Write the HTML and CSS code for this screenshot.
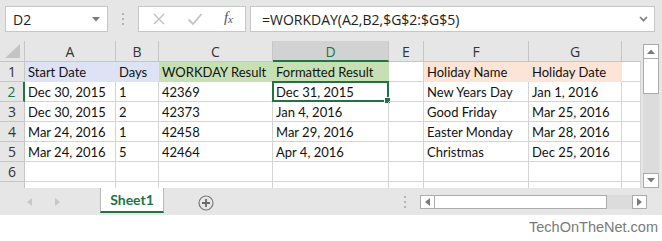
FILE: index.html
```html
<!DOCTYPE html>
<html lang="en">
<head>
    <meta charset="UTF-8">
    <title>WORKDAY example</title>
    <link rel="stylesheet" href="styles.css">
</head>
<body>
    <!-- formula bar -->
    <div class="formula-bar">
        <div class="name-box">
            <span>D2</span>
            <svg class="caret" width="8" height="5" viewBox="0 0 8 5"><path d="M0 0H8L4 4.5Z" fill="#7a7a7a"/></svg>
        </div>
        <div class="grip"><i></i><i></i><i></i></div>
        <div class="fx-buttons">
            <svg width="14" height="14" viewBox="0 0 14 14"><path d="M2 2L12 12M12 2L2 12" stroke="#c2c2c2" stroke-width="1.4"/></svg>
            <svg width="16" height="14" viewBox="0 0 16 14"><path d="M1.5 7.5L6 12L14.5 2" stroke="#c2c2c2" stroke-width="1.8" fill="none"/></svg>
            <span class="fx">f<sub>x</sub></span>
        </div>
        <div class="formula-input">
            <span>=WORKDAY(A2,B2,$G$2:$G$5)</span>
            <svg class="chevron" width="9" height="6" viewBox="0 0 9 6"><path d="M1 1L4.5 4.5L8 1" stroke="#7a7a7a" stroke-width="1.6" fill="none"/></svg>
        </div>
    </div>

    <!-- worksheet -->
    <div class="sheet-area">
        <div class="grid">
            <div class="corner"><svg width="18" height="16" viewBox="0 0 18 16"><path d="M17 1V15H2Z" fill="#c4c4c4"/></svg></div>
            <div class="col-head">A</div>
            <div class="col-head">B</div>
            <div class="col-head">C</div>
            <div class="col-head active">D</div>
            <div class="col-head">E</div>
            <div class="col-head">F</div>
            <div class="col-head">G</div>
            <div class="col-head last"></div>

            <div class="row-head">1</div>
            <div class="cell blue">Start Date</div>
            <div class="cell blue">Days</div>
            <div class="cell green">WORKDAY Result</div>
            <div class="cell green">Formatted Result</div>
            <div class="cell"></div>
            <div class="cell orange">Holiday Name</div>
            <div class="cell orange">Holiday Date</div>
            <div class="cell"></div>

            <div class="row-head active">2</div>
            <div class="cell">Dec 30, 2015</div>
            <div class="cell">1</div>
            <div class="cell">42369</div>
            <div class="cell selected">Dec 31, 2015<span class="handle"></span></div>
            <div class="cell"></div>
            <div class="cell">New Years Day</div>
            <div class="cell">Jan 1, 2016</div>
            <div class="cell"></div>

            <div class="row-head">3</div>
            <div class="cell">Dec 30, 2015</div>
            <div class="cell">2</div>
            <div class="cell">42373</div>
            <div class="cell">Jan 4, 2016</div>
            <div class="cell"></div>
            <div class="cell">Good Friday</div>
            <div class="cell">Mar 25, 2016</div>
            <div class="cell"></div>

            <div class="row-head">4</div>
            <div class="cell">Mar 24, 2016</div>
            <div class="cell">1</div>
            <div class="cell">42458</div>
            <div class="cell">Mar 29, 2016</div>
            <div class="cell"></div>
            <div class="cell">Easter Monday</div>
            <div class="cell">Mar 28, 2016</div>
            <div class="cell"></div>

            <div class="row-head">5</div>
            <div class="cell">Mar 24, 2016</div>
            <div class="cell">5</div>
            <div class="cell">42464</div>
            <div class="cell">Apr 4, 2016</div>
            <div class="cell"></div>
            <div class="cell">Christmas</div>
            <div class="cell">Dec 25, 2016</div>
            <div class="cell"></div>

            <div class="row-head">6</div>
            <div class="cell"></div>
            <div class="cell"></div>
            <div class="cell"></div>
            <div class="cell"></div>
            <div class="cell"></div>
            <div class="cell"></div>
            <div class="cell"></div>
            <div class="cell"></div>

            <div class="row-head part"></div>
            <div class="cell part"></div>
            <div class="cell part"></div>
            <div class="cell part"></div>
            <div class="cell part"></div>
            <div class="cell part"></div>
            <div class="cell part"></div>
            <div class="cell part"></div>
            <div class="cell part"></div>
        </div>

        <div class="vscroll">
            <div class="sb-btn"><svg width="8" height="5" viewBox="0 0 8 5"><path d="M0 5H8L4 0.5Z" fill="#7a7a7a"/></svg></div>
            <div class="v-thumb"></div>
            <div class="v-track"></div>
            <div class="sb-btn"><svg width="8" height="5" viewBox="0 0 8 5"><path d="M0 0H8L4 4.5Z" fill="#7a7a7a"/></svg></div>
        </div>
    </div>

    <!-- sheet tabs -->
    <div class="tab-bar">
        <div class="tab-nav">
            <svg width="5" height="8" viewBox="0 0 5 8"><path d="M5 0V8L0 4Z" fill="#c8c8c8"/></svg>
            <svg width="5" height="8" viewBox="0 0 5 8"><path d="M0 0V8L5 4Z" fill="#c8c8c8"/></svg>
        </div>
        <div class="tab">Sheet1</div>
        <div class="add-sheet">
            <svg width="16" height="16" viewBox="0 0 16 16"><circle cx="8" cy="8" r="7" stroke="#7a7a7a" stroke-width="1.2" fill="none"/><path d="M8 4V12M4 8H12" stroke="#6a6a6a" stroke-width="1.8"/></svg>
        </div>
        <div class="grip tab-grip"><i></i><i></i><i></i></div>
        <div class="hscroll">
            <div class="sb-btn"><svg width="5" height="8" viewBox="0 0 5 8"><path d="M5 0V8L0 4Z" fill="#7a7a7a"/></svg></div>
            <div class="h-thumb"></div>
            <div class="h-track"></div>
            <div class="sb-btn"><svg width="5" height="8" viewBox="0 0 5 8"><path d="M0 0V8L5 4Z" fill="#7a7a7a"/></svg></div>
        </div>
    </div>

    <div class="footer">TechOnTheNet.com</div>
</body>
</html>
```

FILE: styles.css
```css
body {
    margin: 0;
    width: 662px;
    height: 241px;
    background: #fff;
    font-family: "Open Sans", sans-serif;
    overflow: hidden;
}

/* formula bar */
.formula-bar {
    height: 41px;
    box-sizing: border-box;
    padding: 6px 7px 0 5px;
    background: #e6e6e6;
    display: flex;
    align-items: flex-start;
}

.name-box, .fx-buttons, .formula-input {
    height: 26px;
    box-sizing: border-box;
    background: #fff;
    border: 1px solid #c6c6c6;
    display: flex;
    align-items: center;
}

.name-box {
    width: 103px;
    padding: 0 7px 0 7px;
    justify-content: space-between;
    font-size: 14px;
    color: #222;
}

.grip {
    width: 30px;
    display: flex;
    flex-direction: column;
    align-items: center;
    gap: 3px;
    padding-top: 7px;
}

.grip i {
    display: block;
    width: 2px;
    height: 2px;
    background: #b4b4b4;
}

.fx-buttons {
    width: 108px;
    padding: 0 12px 0 13px;
    justify-content: space-between;
}

.fx {
    font-family: "Liberation Serif", serif;
    font-style: italic;
    font-size: 15px;
    color: #555;
    margin-top: -3px;
}

.fx sub {
    font-size: 11px;
    vertical-align: -1px;
}

.formula-input {
    width: 405px;
    margin-left: 4px;
    padding: 0 6px 0 11px;
    justify-content: space-between;
    font-size: 14px;
    color: #222;
}

/* worksheet */
.sheet-area {
    height: 147px;
    background: #e6e6e6;
    display: flex;
}

.grid {
    width: 641px;
    display: grid;
    grid-template-columns: 25px 91px 43px 114px 116px 35px 105px 93px 19px;
    grid-template-rows: 21px repeat(6, 20px) 6px;
    background: #fff;
    border-right: 1px solid #a8a8a8;
    box-sizing: border-box;
    font-family: Lato, "Open Sans", sans-serif;
    font-size: 13px;
}

.corner {
    background: #e6e6e6;
    border-right: 1px solid #c6c6c6;
    border-bottom: 1px solid #c6c6c6;
    display: flex;
    align-items: center;
    justify-content: center;
}

.col-head, .row-head {
    background: #e6e6e6;
    box-sizing: border-box;
    display: flex;
    align-items: center;
    justify-content: center;
    font-family: "Open Sans", sans-serif;
    font-size: 14px;
    color: #333;
}

.col-head {
    border-right: 1px solid #c6c6c6;
    border-bottom: 1px solid #c6c6c6;
    padding-top: 1px;
}

.col-head.last {
    border-right: none;
}

.col-head.active {
    background: #d2d2d2;
    color: #217346;
    border-bottom: 2px solid #217346;
}

.row-head {
    border-right: 1px solid #c6c6c6;
    border-bottom: 1px solid #c6c6c6;
}

.row-head.active {
    color: #217346;
    border-right: 2px solid #217346;
}

.row-head.part {
    border-bottom: none;
}

.cell {
    box-sizing: border-box;
    border-right: 1px solid #d4d4d4;
    border-bottom: 1px solid #d4d4d4;
    padding: 0 3px;
    line-height: 20px;
    color: #111;
    white-space: nowrap;
    position: relative;
}

.cell.part {
    border-bottom: none;
}

.cell.blue {
    background: #dde3f4;
    border-color: transparent;
}

.cell.green {
    background: #c6e0b4;
    border-color: transparent;
}

.cell.orange {
    background: #fce4d6;
    border-color: transparent;
}

.cell.selected {
    border: 2px solid #217346;
    margin: -1px 0 0 -1px;
    padding-left: 2px;
    line-height: 18px;
}

.handle {
    position: absolute;
    right: -4px;
    bottom: -4px;
    width: 5px;
    height: 5px;
    background: #217346;
    border: 1px solid #fff;
}

.vscroll {
    width: 16px;
    margin: 3px 0 0 2px;
    height: 144px;
    display: flex;
    flex-direction: column;
    background: #dcdcdc;
}

.sb-btn {
    flex: none;
    width: 16px;
    height: 15px;
    box-sizing: border-box;
    background: #fff;
    border: 1px solid #ababab;
    display: flex;
    align-items: center;
    justify-content: center;
}

.v-thumb {
    height: 34px;
    background: #fff;
    border: 1px solid #ababab;
    border-top: none;
}

.v-track {
    flex: 1;
}

/* tabs */
.tab-bar {
    height: 27px;
    background: #e6e6e6;
    display: flex;
    align-items: flex-start;
}

.tab-nav {
    width: 100px;
    display: flex;
    gap: 23px;
    padding: 10px 0 0 27px;
    box-sizing: border-box;
}

.tab {
    width: 64px;
    height: 25px;
    box-sizing: border-box;
    background: #fff;
    border-left: 1px solid #b8b8b8;
    border-right: 1px solid #b8b8b8;
    border-bottom: 2px solid #217346;
    text-align: center;
    font-family: Lato, sans-serif;
    font-weight: bold;
    font-size: 14px;
    line-height: 23px;
    color: #217346;
}

.add-sheet {
    margin: 6px 0 0 34px;
    height: 16px;
}

.tab-grip {
    margin-left: 176px;
    padding-top: 8px;
}

.hscroll {
    margin: 7px 0 0 0;
    width: 227px;
    height: 14px;
    display: flex;
    background: #dcdcdc;
}

.hscroll .sb-btn {
    width: 15px;
    height: 14px;
}

.h-thumb {
    width: 172px;
    background: #fff;
    border: 1px solid #ababab;
    border-left: none;
    box-sizing: border-box;
}

.h-track {
    flex: 1;
}

.footer {
    height: 26px;
    text-align: right;
    padding-right: 4px;
    font-family: "Liberation Sans", Arial, sans-serif;
    font-size: 14.5px;
    line-height: 25px;
    color: #7a7a7a;
}
```
